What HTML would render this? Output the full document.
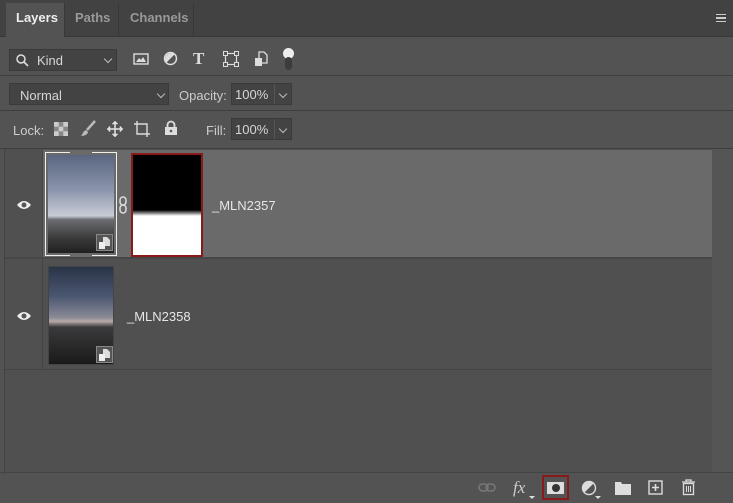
<!DOCTYPE html><html><head><style>
*{margin:0;padding:0;box-sizing:border-box}
body{width:733px;height:503px;background:#535353;font-family:"Liberation Sans",sans-serif;color:#d6d6d6;position:relative;overflow:hidden;font-size:13px}
.a{position:absolute}
.field{position:absolute;background:#434343;border:1px solid #3a3a3a}
.chev{position:absolute;width:6px;height:6px;border-right:1px solid #bbb;border-bottom:1px solid #bbb;transform:rotate(45deg)}
.ic{position:absolute;color:#ddd}
</style></head><body>
<!-- tab bar -->
<div class="a" style="left:0;top:0;width:733px;height:37px;background:#424242;border-bottom:1px solid #383838"></div>
<div class="a" style="left:6px;top:3px;width:58px;height:34px;background:#535353"></div>
<div class="a" style="left:16px;top:10px;font-weight:bold;color:#eee;font-size:13px">Layers</div>
<div class="a" style="left:64px;top:3px;width:1px;height:34px;background:#383838"></div>
<div class="a" style="left:75px;top:10px;font-weight:bold;color:#999;font-size:13px">Paths</div>
<div class="a" style="left:118px;top:3px;width:1px;height:34px;background:#383838"></div>
<div class="a" style="left:130px;top:10px;font-weight:bold;color:#999;font-size:13px">Channels</div>
<div class="a" style="left:193px;top:3px;width:1px;height:34px;background:#383838"></div>
<div class="a" style="left:716px;top:14px;width:10px;height:8px;border-top:1px solid #ccc;border-bottom:1px solid #ccc"><div style="margin-top:2px;height:2px;border-top:1px solid #ccc;border-bottom:1px solid #ccc"></div></div>
<!-- kind row -->
<div class="field" style="left:9px;top:49px;width:108px;height:22px"></div>
<svg class="a" style="left:15px;top:53px" width="14" height="14"><circle cx="6" cy="6" r="4" fill="none" stroke="#ddd" stroke-width="1.5"/><line x1="9" y1="9" x2="13" y2="13" stroke="#ddd" stroke-width="1.6"/></svg>
<div class="a" style="left:37px;top:53px">Kind</div>
<div class="chev" style="left:105px;top:56px"></div>
<svg class="a" style="left:133px;top:52px" width="16" height="14"><rect x="1" y="2" width="14" height="10" fill="none" stroke="#ddd" stroke-width="1.4"/><path d="M3 10 L6 6 L8 8 L10 5 L13 10Z" fill="#ddd"/></svg>
<svg class="a" style="left:163px;top:51px" width="15" height="15"><circle cx="7.5" cy="7.5" r="6" fill="none" stroke="#ddd" stroke-width="1.5"/><path d="M3.3 11.7 A6 6 0 0 1 11.7 3.3Z" fill="#ddd"/></svg>
<div class="a" style="left:193px;top:49px;font-family:'Liberation Serif',serif;font-weight:bold;font-size:17px;color:#ddd">T</div>
<svg class="a" style="left:223px;top:51px" width="16" height="16"><rect x="2.5" y="2.5" width="11" height="11" fill="none" stroke="#ddd" stroke-width="1.2"/><g fill="#555" stroke="#ddd"><rect x="0.5" y="0.5" width="4" height="4"/><rect x="11.5" y="0.5" width="4" height="4"/><rect x="0.5" y="11.5" width="4" height="4"/><rect x="11.5" y="11.5" width="4" height="4"/></g></svg>
<svg class="a" style="left:254px;top:51px" width="15" height="16"><path d="M5 1 H10 L13 4 V12 H5Z" fill="none" stroke="#ddd" stroke-width="1.3"/><rect x="1" y="7" width="7" height="8" fill="#ddd"/></svg>
<div class="a" style="left:283px;top:48px;width:11px;height:11px;border-radius:50%;background:#eee"></div>
<div class="a" style="left:285px;top:57px;width:7px;height:13px;border-radius:4px;background:#3c3c3c"></div>
<div class="a" style="left:0;top:75px;width:733px;height:1px;background:#3e3e3e"></div>
<!-- blend row -->
<div class="field" style="left:9px;top:83px;width:160px;height:22px"></div>
<div class="a" style="left:20px;top:88px">Normal</div>
<div class="chev" style="left:158px;top:91px"></div>
<div class="a" style="left:179px;top:88px;color:#ccc">Opacity:</div>
<div class="field" style="left:231px;top:83px;width:61px;height:22px"></div>
<div class="a" style="left:235px;top:87px">100%</div>
<div class="a" style="left:274px;top:84px;width:1px;height:20px;background:#555"></div>
<div class="chev" style="left:280px;top:91px"></div>
<div class="a" style="left:0;top:110px;width:733px;height:1px;background:#3e3e3e"></div>
<!-- lock row -->
<div class="a" style="left:13px;top:123px;color:#ccc">Lock:</div>
<svg class="a" style="left:54px;top:122px" width="14" height="14"><rect width="14" height="14" fill="#888"/><g fill="#ccc"><rect x="0" y="0" width="4.7" height="4.7"/><rect x="9.3" y="0" width="4.7" height="4.7"/><rect x="4.7" y="4.7" width="4.6" height="4.6"/><rect x="0" y="9.3" width="4.7" height="4.7"/><rect x="9.3" y="9.3" width="4.7" height="4.7"/></g></svg>
<svg class="a" style="left:80px;top:120px" width="17" height="17"><path d="M15 1 L7 10" stroke="#bbb" stroke-width="2.5"/><path d="M6 10 C3 11 3 14 1 16 C5 16 8 14 8 12Z" fill="#bbb"/></svg>
<svg class="a" style="left:106px;top:120px" width="18" height="18"><g stroke="#ddd" stroke-width="1.6" fill="#ddd"><line x1="9" y1="2" x2="9" y2="16"/><line x1="2" y1="9" x2="16" y2="9"/><path d="M6 4 L9 1 L12 4Z M6 14 L9 17 L12 14Z M4 6 L1 9 L4 12Z M14 6 L17 9 L14 12Z" stroke-width="0.5"/></g></svg>
<svg class="a" style="left:133px;top:120px" width="18" height="18"><path d="M4 1 V14 H17 M1 4 H14 V17" fill="none" stroke="#ddd" stroke-width="1.4"/></svg>
<svg class="a" style="left:164px;top:120px" width="14" height="16"><path d="M3.5 7 V5 A3.5 3.5 0 0 1 10.5 5 V7" fill="none" stroke="#ddd" stroke-width="1.8"/><rect x="1" y="7" width="12" height="8" fill="#ddd"/><circle cx="7" cy="11" r="1.3" fill="#555"/></svg>
<div class="a" style="left:206px;top:123px;color:#ccc">Fill:</div>
<div class="field" style="left:231px;top:118px;width:61px;height:22px"></div>
<div class="a" style="left:235px;top:122px">100%</div>
<div class="a" style="left:274px;top:119px;width:1px;height:20px;background:#555"></div>
<div class="chev" style="left:280px;top:126px"></div>
<!-- list -->
<div class="a" style="left:0;top:148px;width:733px;height:1px;background:#3e3e3e"></div>
<div class="a" style="left:4px;top:149px;width:1px;height:325px;background:#444"></div>
<div class="a" style="left:5px;top:149px;width:707px;height:324px;background:#505050"></div>
<div class="a" style="left:712px;top:149px;width:21px;height:324px;background:#555"></div>
<!-- layer 1 -->
<div class="a" style="left:42px;top:150px;width:670px;height:107px;background:#6a6a6a"></div>
<div class="a" style="left:5px;top:257px;width:707px;height:2px;background:#474747"></div>
<div class="a" style="left:42px;top:150px;width:1px;height:220px;background:#444"></div>
<svg class="a" style="left:16px;top:199px" width="16" height="12"><path d="M1 6 Q8 -2 15 6 Q8 14 1 6Z" fill="#eee"/><circle cx="8" cy="6" r="2.5" fill="#555"/></svg>
<div class="a" style="left:45px;top:152px;width:72px;height:104px;border:1px solid #eee;border-top-color:transparent;border-bottom-color:transparent"></div>
<div class="a" style="left:45px;top:152px;width:72px;height:1px;background:linear-gradient(90deg,#eee 35%,transparent 35%,transparent 65%,#eee 65%)"></div>
<div class="a" style="left:45px;top:255px;width:72px;height:1px;background:linear-gradient(90deg,#eee 35%,transparent 35%,transparent 65%,#eee 65%)"></div>
<div class="a" style="left:48px;top:155px;width:66px;height:98px;background:linear-gradient(180deg,#5a6680 0%,#8a94aa 35%,#c8ccd6 62%,#6a6c70 66%,#3a3a3a 85%,#202020 100%)"></div>
<div class="a" style="left:96px;top:234px;width:17px;height:17px;background:#555;border:1px solid #888"></div>
<svg class="a" style="left:98px;top:236px" width="14" height="14"><path d="M5 1H9L12 4V10H5Z" fill="#ddd"/><rect x="1" y="6" width="6" height="7" fill="#eee"/></svg>
<svg class="a" style="left:118px;top:196px" width="10" height="18"><rect x="2" y="1" width="6" height="8" rx="3" fill="none" stroke="#ddd" stroke-width="1.5"/><rect x="2" y="9" width="6" height="8" rx="3" fill="none" stroke="#ddd" stroke-width="1.5"/></svg>
<div class="a" style="left:131px;top:153px;width:72px;height:104px;border:2px solid #8a1a1a;background:linear-gradient(180deg,#000 55%,#fff 61%,#fff 100%)"></div>
<div class="a" style="left:212px;top:198px;color:#e6e6e6">_MLN2357</div>
<!-- layer 2 -->
<div class="a" style="left:5px;top:369px;width:707px;height:1px;background:#444"></div>
<svg class="a" style="left:16px;top:310px" width="16" height="12"><path d="M1 6 Q8 -2 15 6 Q8 14 1 6Z" fill="#eee"/><circle cx="8" cy="6" r="2.5" fill="#555"/></svg>
<div class="a" style="left:48px;top:266px;width:66px;height:99px;border:1px solid #444;background:linear-gradient(180deg,#2a3448 0%,#4a5670 30%,#8a8a96 52%,#b8aaa8 56%,#3a3a3c 62%,#1a1a1a 100%)"></div>
<div class="a" style="left:96px;top:346px;width:17px;height:17px;background:#555;border:1px solid #888"></div>
<svg class="a" style="left:98px;top:348px" width="14" height="14"><path d="M5 1H9L12 4V10H5Z" fill="#ddd"/><rect x="1" y="6" width="6" height="7" fill="#eee"/></svg>
<div class="a" style="left:127px;top:309px;color:#e6e6e6">_MLN2358</div>
<!-- bottom bar -->
<div class="a" style="left:0;top:472px;width:733px;height:1px;background:#444"></div>
<svg class="a" style="left:478px;top:482px" width="18" height="12"><rect x="1" y="2" width="9" height="7" rx="3.5" fill="none" stroke="#777" stroke-width="1.6"/><rect x="8" y="2" width="9" height="7" rx="3.5" fill="none" stroke="#777" stroke-width="1.6"/></svg>
<div class="a" style="left:513px;top:478px;font-family:'Liberation Serif',serif;font-style:italic;font-size:17px;color:#ccc">fx</div>
<div class="a" style="left:529px;top:496px;border:3px solid transparent;border-top-color:#ddd"></div>
<div class="a" style="left:542px;top:475px;width:27px;height:25px;border:2px solid #8a1a1a"></div>
<div class="a" style="left:547px;top:482px;width:17px;height:12px;background:#ddd"><div style="margin:2px auto;width:8px;height:8px;border-radius:50%;background:#333"></div></div>
<svg class="a" style="left:581px;top:480px" width="16" height="16"><circle cx="8" cy="8" r="6.5" fill="none" stroke="#ddd" stroke-width="1.4"/><path d="M3.4 12.6 A6.5 6.5 0 0 1 12.6 3.4Z" fill="#ddd"/></svg>
<div class="a" style="left:595px;top:496px;border:3px solid transparent;border-top-color:#ddd"></div>
<svg class="a" style="left:614px;top:481px" width="18" height="15"><path d="M1 1H7L8 3H17V14H1Z" fill="#ddd"/></svg>
<svg class="a" style="left:648px;top:480px" width="15" height="15"><rect x="1" y="1" width="13" height="13" fill="none" stroke="#ddd" stroke-width="1.4"/><path d="M7.5 4V11M4 7.5H11" stroke="#ddd" stroke-width="1.6"/></svg>
<svg class="a" style="left:681px;top:479px" width="15" height="17"><path d="M1 3H14M5 3V1H10V3" fill="none" stroke="#ddd" stroke-width="1.3"/><rect x="2.5" y="4.5" width="10" height="11" fill="none" stroke="#ddd" stroke-width="1.3"/><path d="M5.5 7V13M7.5 7V13M9.5 7V13" stroke="#ddd"/></svg>
</body></html>
